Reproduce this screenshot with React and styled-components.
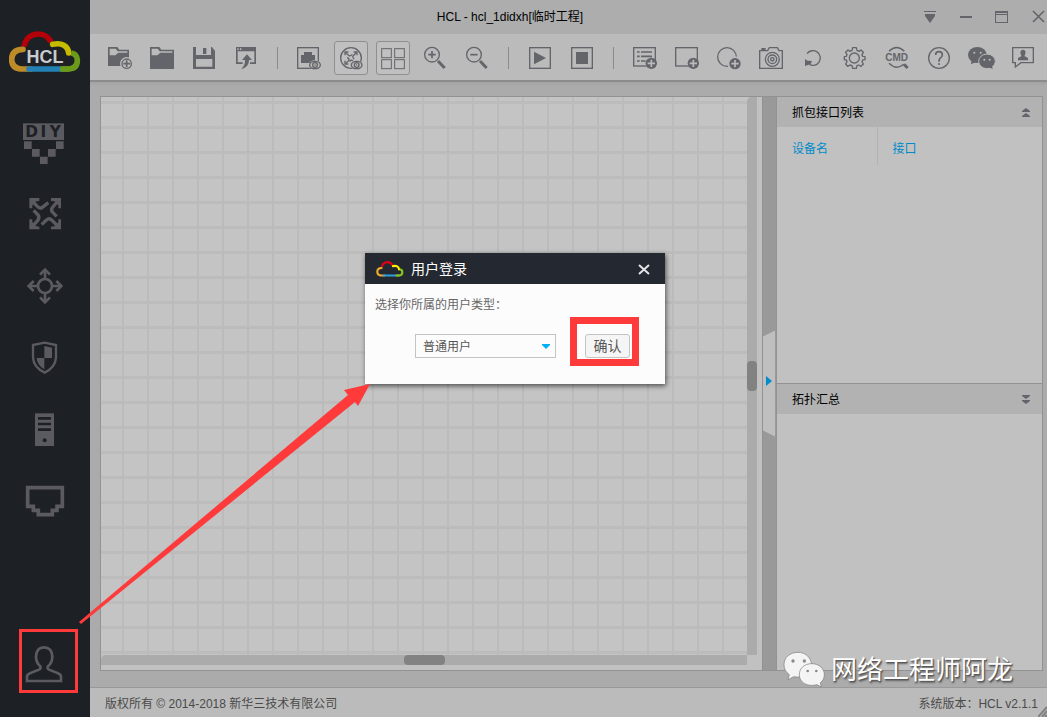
import { useState } from "react";
import { createGlobalStyle, styled } from "styled-components";

const INK = "#64656b";

const FolderShape = ({ w }) => (
  <path
    fillRule="evenodd"
    fill={INK}
    d={`M0 3H28L34 11H${w}V${w === 72 ? 69 : 60}H0Z M5 8V28H22L31 20H${w - 5}V16H29L23 8Z`}
  />
);

const PlusBadge = ({ x, y }) => (
  <>
    <circle cx={x} cy={y} r="17" fill={INK} />
    <path d={`M${x - 11} ${y}H${x + 11}M${x} ${y - 11}V${y + 11}`} stroke="#bbb" strokeWidth="5" />
  </>
);

const EyeBadge = ({ x, y }) => (
  <>
    <ellipse cx={x} cy={y} rx="19" ry="14" fill="#bbb" />
    <ellipse cx={x} cy={y} rx="16" ry="11" fill="none" stroke={INK} strokeWidth="4" />
    <circle cx={x} cy={y} r="7" fill="none" stroke={INK} strokeWidth="4" />
    <circle cx={x} cy={y} r="2" fill={INK} />
  </>
);

const Magnifier = ({ children }) => (
  <g fill="none" stroke={INK}>
    <circle cx="27" cy="26" r="22" strokeWidth="4" />
    <path d="M45 45L65 66" strokeWidth="9" />
    {children}
  </g>
);

const toolGroups = [
  [
    {
      label: "新建工程",
      icon: (
        <>
          <FolderShape w={63} />
          <circle cx="56" cy="53" r="20" fill="#bbb" />
          <circle cx="56" cy="53" r="14" fill="#bbb" stroke={INK} strokeWidth="4" />
          <path d="M46 53H66M56 43V63" stroke={INK} strokeWidth="5" />
        </>
      ),
    },
    { label: "打开工程", icon: <FolderShape w={72} /> },
    {
      label: "保存工程",
      icon: (
        <path
          fillRule="evenodd"
          fill={INK}
          d="M3 3H12V27H57V3H60L69 15V69H3Z M12 39V62H61V39Z M33 6H43V24H33Z"
        />
      ),
    },
    {
      label: "导出工程",
      icon: (
        <>
          <path fillRule="evenodd" fill={INK} d="M6 3H66V54H48V49H61V16H11V49H26V54H6Z M10 7V12H14V7Z M18 7V12H22V7Z" />
          <path fill={INK} d="M39 25L54 42H45Q46 62 21 70Q34 58 33 42H24Z" />
        </>
      ),
    },
  ],
  [
    {
      label: "显示接口",
      icon: (
        <>
          <rect x="2" y="5" width="62" height="62" fill="none" stroke={INK} strokeWidth="4" />
          <path fill={INK} d="M21 18H45V27H54V51H12V27H21Z" />
          <EyeBadge x={54} y={57} />
        </>
      ),
    },
    {
      label: "显示设备",
      active: true,
      icon: (
        <>
          <circle cx="36" cy="36" r="31" fill="none" stroke={INK} strokeWidth="4" />
          <g fill="none" stroke={INK} strokeWidth="4">
            <path d="M18 28V18H28M44 18H54V28M18 44V54H28" />
            <path d="M19 19L30 29Q35 31 40 25M53 19L43 29Q39 34 46 39M19 53L29 44Q32 39 25 34M32 47Q36 40 42 44" />
          </g>
          <EyeBadge x={53} y={57} />
        </>
      ),
    },
    {
      label: "显示网格",
      active: true,
      icon: (
        <g fill="none" stroke={INK} strokeWidth="3">
          <rect x="2" y="8" width="29" height="27" />
          <rect x="41" y="8" width="29" height="27" />
          <rect x="2" y="41" width="29" height="27" />
          <rect x="41" y="41" width="29" height="27" />
        </g>
      ),
    },
    {
      label: "放大",
      icon: (
        <Magnifier>
          <path d="M16 26H38M27 15V37" strokeWidth="5" />
        </Magnifier>
      ),
    },
    {
      label: "缩小",
      icon: (
        <Magnifier>
          <path d="M16 26H38" strokeWidth="5" />
        </Magnifier>
      ),
    },
  ],
  [
    {
      label: "启动",
      icon: (
        <>
          <rect x="5" y="5" width="62" height="62" fill="none" stroke={INK} strokeWidth="4" />
          <path fill={INK} d="M18 17L54 36L18 55Z" />
        </>
      ),
    },
    {
      label: "停止",
      icon: (
        <>
          <rect x="5" y="5" width="62" height="62" fill="none" stroke={INK} strokeWidth="4" />
          <rect x="18" y="18" width="36" height="36" fill={INK} />
        </>
      ),
    },
  ],
  [
    {
      label: "添加文本",
      icon: (
        <>
          <rect x="2" y="5" width="65" height="55" fill="none" stroke={INK} strokeWidth="4" />
          <path d="M12 18H20M24 18H57M12 31H20M24 31H57M12 45H20M24 45H38" stroke={INK} strokeWidth="5" />
          <PlusBadge x={55} y={52} />
        </>
      ),
    },
    {
      label: "添加矩形",
      icon: (
        <>
          <rect x="2" y="5" width="65" height="55" fill="none" stroke={INK} strokeWidth="4" />
          <PlusBadge x={55} y={52} />
        </>
      ),
    },
    {
      label: "添加圆形",
      icon: (
        <>
          <circle cx="30" cy="33" r="28" fill="none" stroke={INK} strokeWidth="4" />
          <circle cx="54" cy="53" r="22" fill="#bbb" />
          <PlusBadge x={54} y={53} />
        </>
      ),
    },
    {
      label: "截图",
      icon: (
        <g fill="none" stroke={INK} strokeWidth="4">
          <path d="M2 14H26L31 5H55L60 14H70V67H2Z" />
          <path d="M7 9H20" strokeWidth="6" />
          <circle cx="40" cy="40" r="21" />
          <circle cx="40" cy="40" r="13" />
          <circle cx="40" cy="40" r="5" />
        </g>
      ),
    },
    {
      label: "刷新",
      icon: (
        <>
          <path d="M18 23A22 22 0 1 1 25 55" fill="none" stroke={INK} strokeWidth="4" />
          <path fill={INK} d="M12 39L20 44L33 45L29 54L12 60Z" />
        </>
      ),
    },
    {
      label: "设置",
      icon: (
        <g fill="none" stroke={INK} strokeWidth="4">
          <path
            strokeLinejoin="round"
            d="M29 5H40L42 13L48 16L54 12L61 19L57 26L59 31L66 32V41L59 42L57 47L61 54L54 61L47 57L42 59L40 67H29L27 59L21 57L14 61L8 54L12 47L10 42L4 41V32L10 31L12 26L8 19L15 12L21 16L27 13Z"
          />
          <circle cx="34" cy="36" r="15" />
        </g>
      ),
    },
    {
      label: "命令行",
      icon: (
        <>
          <path d="M12 16Q35 -7 58 16M12 52Q34 74 56 55" fill="none" stroke={INK} strokeWidth="4" />
          <path d="M57 55L68 66" stroke={INK} strokeWidth="9" />
          <text x="35" y="44" textAnchor="middle" fontSize="30" fontWeight="700" fontFamily="Liberation Sans, sans-serif" fill={INK}>
            CMD
          </text>
        </>
      ),
    },
    {
      label: "帮助",
      icon: (
        <>
          <circle cx="36" cy="36" r="31" fill="none" stroke={INK} strokeWidth="4" />
          <path d="M26 27Q26 17 36 17Q46 17 46 27Q46 33 39 37Q36 40 36 47" fill="none" stroke={INK} strokeWidth="5" />
          <circle cx="36" cy="54" r="3" fill={INK} />
        </>
      ),
    },
    {
      label: "微信",
      icon: (
        <>
          <ellipse cx="25" cy="27" rx="28" ry="24" fill={INK} />
          <path fill={INK} d="M8 43L6 55L21 48Z" />
          <circle cx="16" cy="20" r="3" fill="#bbb" />
          <circle cx="35" cy="20" r="3" fill="#bbb" />
          <ellipse cx="54" cy="46" rx="25" ry="22" fill={INK} stroke="#bbb" strokeWidth="3" />
          <path fill={INK} d="M60 64L71 69L68 57Z" />
          <circle cx="46" cy="41" r="3" fill="#bbb" />
          <circle cx="62" cy="41" r="3" fill="#bbb" />
        </>
      ),
    },
    {
      label: "反馈",
      icon: (
        <>
          <path d="M5 5H67V50H30L13 63V50H5Z" fill="none" stroke={INK} strokeWidth="4" />
          <path fill={INK} d="M36 11C46 11 45 23 40 30L51 36V43H21V36L32 30C27 23 26 11 36 11Z" />
        </>
      ),
    },
  ],
];

const devices = [
  {
    label: "DIY",
    icon: (
      <>
        <rect x="0" y="10" width="123" height="50" fill="#5a5a60" />
        <g textAnchor="middle" fontSize="46" fontWeight="700" fontFamily="DejaVu Sans, sans-serif" fill="#1d2024">
          <text x="26" y="51">D</text>
          <text x="61" y="51">I</text>
          <text x="97" y="51">Y</text>
        </g>
        <path fill="#5a5a60" d="M3 64h23v23h-23zM99 64h23v23h-23zM27 87h23v23h-23zM75 87h23v23h-23zM51 110h23v23h-23z" />
      </>
    ),
  },
  {
    label: "路由器",
    icon: (
      <>
        <path fill="#5a5a60" d="M19 18H49V27L40 28L28 40V49H19ZM84 18H114V49H106V40L94 28L84 27ZM19 82H28V91L40 103L49 104V112H19ZM84 112V104L94 103L106 91V82H114V112Z" />
        <path
          fill="none"
          stroke="#5a5a60"
          strokeWidth="10"
          d="M28 27L42 42Q50 52 58 46L76 32M105 27L91 43Q82 52 88 60L101 73M28 103L41 89Q51 80 46 70L32 55M56 98L70 84Q79 77 86 84L105 103"
        />
      </>
    ),
  },
  {
    label: "交换机",
    icon: (
      <g fill="none" stroke="#5a5a60" strokeWidth="8">
        <circle cx="66" cy="66" r="21" />
        <path d="M66 45V17M66 87V115M45 66H17M87 66H115" />
        <path d="M51 32L66 17L81 32M51 100L66 115L81 100M32 51L17 66L32 81M100 51L115 66L100 81" />
      </g>
    ),
  },
  {
    label: "防火墙",
    icon: (
      <>
        <path d="M30 27L65 20L99 27V65Q97 94 65 110Q32 94 30 65Z" fill="none" stroke="#5a5a60" strokeWidth="7" />
        <path fill="#5a5a60" d="M64 30L87 35V66H64ZM64 66V100Q42 88 41 66Z" />
      </>
    ),
  },
  {
    label: "服务器",
    icon: (
      <>
        <rect x="36" y="16" width="57" height="98" fill="#5a5a60" />
        <path d="M45 31H84M45 48H84M45 65H84" stroke="#1d2024" strokeWidth="8" />
        <circle cx="65" cy="97" r="6" fill="#1d2024" />
      </>
    ),
  },
  {
    label: "终端",
    icon: (
      <path d="M14 23H118V79H102V91H88V104H46V91H31V79H14Z" fill="none" stroke="#5a5a60" strokeWidth="11" />
    ),
  },
];

const Cloud = ({ colors, children, ...rest }) => (
  <svg viewBox="27 93 216 126" aria-hidden="true" {...rest}>
    <g fill="none" strokeWidth="17" strokeLinecap="round">
      <path d="M72 140C78 95 135 90 153 126" stroke={colors[1]} strokeLinecap="butt" />
      <path d="M214 159Q232 162 232 181Q232 207 204 207H180" stroke={colors[4]} strokeLinecap="butt" />
      <path d="M69 148Q35 149 35 178Q35 207 68 207H92" stroke={colors[0]} />
      <path d="M87 207H178" stroke={colors[2]} />
      <path d="M158 133C185 127 204 137 206 159" stroke={colors[3]} />
      <path d="M188 207H204" stroke={colors[4]} />
    </g>
    {children}
  </svg>
);

const WechatMark = () => (
  <svg width="42" height="38" viewBox="0 0 126 114" aria-hidden="true">
    <g fill="#f4f4f4" stroke="#7a7a7a" strokeWidth="2">
      <path d="M45 4C20 4 3 20 3 41C3 54 9 64 19 71L15 86L32 77C78 84 88 58 86 40C83 18 66 4 45 4Z" />
      <path d="M86 38C64 38 49 52 49 71C49 94 72 109 102 101L115 108L112 95C120 89 124 81 124 71C124 52 108 38 86 38Z" />
    </g>
    <g fill="#8a8a8a">
      <circle cx="30" cy="30" r="5" />
      <circle cx="64" cy="30" r="5" />
      <circle cx="74" cy="60" r="4" />
      <circle cx="100" cy="60" r="4" />
    </g>
  </svg>
);

const App = () => {
  const [userType, setUserType] = useState("普通用户");

  return (
    <>
      <GlobalStyle />
      <Shell>
        <Sidebar>
          <Logo colors={["#bd8b27", "#b40008", "#2380b5", "#c5bb00", "#6c9a1b"]}>
            <text x="135" y="190" textAnchor="middle" fontSize="54" fontWeight="700" fontFamily="Liberation Sans, sans-serif" fill="#c8cbd0">
              HCL
            </text>
          </Logo>
          <DeviceNav>
            {devices.map((device) => (
              <DeviceButton key={device.label} aria-label={device.label}>
                <svg width="44" height="44" viewBox="0 0 132 132">{device.icon}</svg>
              </DeviceButton>
            ))}
          </DeviceNav>
          <UserButton aria-label="用户">
            <svg width="44" height="44" viewBox="0 0 132 132">
              <path
                d="M12 117V104Q12 98 21 94L48 83Q55 79 52 73Q39 61 39 44Q40 16 63 16Q87 16 88 44Q88 61 75 73Q71 79 78 83L105 94Q114 98 114 104V117Z"
                fill="none"
                stroke="#5a5a60"
                strokeWidth="8"
              />
            </svg>
            <UserMark />
          </UserButton>
        </Sidebar>

        <Content>
          <TitleBar>
            <Title>HCL - hcl_1didxh[临时工程]</Title>
            <WindowControls>
              <WindowButton aria-label="菜单">
                <svg width="14" height="14" fill={INK}>
                  <path d="M1 1H13V2H1ZM2 4H12V6L7 13L2 6Z" />
                </svg>
              </WindowButton>
              <WindowButton aria-label="最小化">
                <svg width="14" height="14" fill={INK}>
                  <path d="M1 6H13V8H1Z" />
                </svg>
              </WindowButton>
              <WindowButton aria-label="最大化">
                <svg width="14" height="14" fill={INK}>
                  <path fillRule="evenodd" d="M0 1H13V13H0ZM1 5V12H12V5ZM1 3V4H12V3Z" />
                </svg>
              </WindowButton>
              <WindowButton aria-label="关闭">
                <svg width="14" height="14" stroke={INK} strokeWidth="1.6">
                  <path d="M2 1L13 12M13 1L2 12" />
                </svg>
              </WindowButton>
            </WindowControls>
          </TitleBar>

          <Toolbar>
            {toolGroups.map((group, index) => (
              <ToolGroup key={index}>
                {group.map((tool) => (
                  <ToolCell key={tool.label}>
                    <ToolButton $active={tool.active} aria-label={tool.label}>
                      <svg width="24" height="24" viewBox="0 0 72 72" overflow="visible">
                        {tool.icon}
                      </svg>
                    </ToolButton>
                  </ToolCell>
                ))}
              </ToolGroup>
            ))}
          </Toolbar>

          <Main>
            <Workspace>
              <GridCanvas />
              <ScrollTrack>
                <ScrollThumb $vertical />
              </ScrollTrack>
              <ScrollTrack>
                <ScrollThumb />
              </ScrollTrack>
            </Workspace>
            <Splitter>
              <CollapseHandle aria-label="收起侧栏">
                <svg width="6" height="10" fill="#008bc9">
                  <path d="M0 0L6 5L0 10Z" />
                </svg>
              </CollapseHandle>
            </Splitter>
            <SidePanels>
              <Panel>
                <PanelHeader>
                  <PanelTitle>抓包接口列表</PanelTitle>
                  <PanelToggle aria-label="收起">
                    <svg width="8" height="10" fill={INK}>
                      <path d="M4 0L8 3V4H0V3ZM4 5L8 8V9H0V8Z" />
                    </svg>
                  </PanelToggle>
                </PanelHeader>
                <CaptureTable>
                  <thead>
                    <tr>
                      <th>设备名</th>
                      <th>接口</th>
                    </tr>
                  </thead>
                </CaptureTable>
              </Panel>
              <Panel>
                <PanelHeader>
                  <PanelTitle>拓扑汇总</PanelTitle>
                  <PanelToggle aria-label="展开">
                    <svg width="8" height="10" fill={INK}>
                      <path d="M0 0H8V1L4 4L0 1ZM0 5H8V6L4 9L0 6Z" />
                    </svg>
                  </PanelToggle>
                </PanelHeader>
              </Panel>
            </SidePanels>
          </Main>

          <Footer>
            <span>版权所有 © 2014-2018 新华三技术有限公司</span>
            <span>系统版本：HCL v2.1.1</span>
            <Grip width="9" height="12" stroke="#808080" strokeWidth="2">
              <path d="M0 12L9 2M4 12L9 6M7 12L9 10" />
            </Grip>
          </Footer>
        </Content>

        <LoginDialog role="dialog" aria-labelledby="login-title">
          <DialogHeader>
            <Cloud width="28" height="16" colors={["#f0a92f", "#e60012", "#2ea0e0", "#fff000", "#86c222"]} />
            <DialogTitle id="login-title">用户登录</DialogTitle>
            <DialogClose aria-label="关闭">
              <svg width="12" height="12" stroke="#e4e4e6" strokeWidth="2">
                <path d="M1 2L11 11M11 2L1 11" />
              </svg>
            </DialogClose>
          </DialogHeader>
          <DialogBody>
            <label htmlFor="user-type">选择你所属的用户类型：</label>
            <DialogRow>
              <SelectBox>
                <UserTypeSelect
                  id="user-type"
                  value={userType}
                  onChange={(event) => setUserType(event.target.value)}
                >
                  <option>普通用户</option>
                </UserTypeSelect>
                <SelectArrow width="8" height="5" fill="#00b0f6">
                  <path d="M0 0H8V1L4 5L0 1Z" />
                </SelectArrow>
              </SelectBox>
              <ConfirmWrap>
                <ConfirmButton>确认</ConfirmButton>
                <ConfirmMark />
              </ConfirmWrap>
            </DialogRow>
          </DialogBody>
        </LoginDialog>

        <Arrow width="292" height="242" fill="#fe3a3a">
          <path d="M0 240L269 13L265 8L291 2L279 24L276 20L2 242Z" />
        </Arrow>

        <Watermark>
          <WechatMark />
          <span>网络工程师阿龙</span>
        </Watermark>
      </Shell>
    </>
  );
};

const GlobalStyle = createGlobalStyle`
  * {
    box-sizing: border-box;
  }
  body {
    margin: 0;
    font: 12px/16px "Liberation Sans", "Noto Sans CJK SC", sans-serif;
    color: #000;
  }
  button {
    display: flex;
    align-items: center;
    justify-content: center;
    padding: 0;
    border: 0;
    background: none;
    font: inherit;
    color: inherit;
    cursor: pointer;
  }
  svg {
    display: block;
    flex: none;
  }
`;

const Shell = styled.div`
  position: relative;
  display: flex;
  height: 100vh;
  overflow: hidden;
`;

const Sidebar = styled.aside`
  display: flex;
  flex-direction: column;
  width: 90px;
  flex: none;
  padding: 31px 0 31px;
  background: #1d2024;
`;

const Logo = styled(Cloud)`
  width: 72px;
  height: 42px;
  margin: 0 9px 33px;
`;

const DeviceNav = styled.nav`
  display: flex;
  flex-direction: column;
`;

const DeviceButton = styled.button`
  height: 72px;
`;

const UserButton = styled.button`
  position: relative;
  width: 44px;
  height: 44px;
  margin: auto auto 0;
`;

const UserMark = styled.span`
  position: absolute;
  top: -13px;
  left: -4px;
  width: 59px;
  height: 64px;
  border: 3px solid #fe3a3a;
`;

const Content = styled.div`
  display: flex;
  flex-direction: column;
  flex: 1;
  min-width: 0;
  background: #ababab;
`;

const TitleBar = styled.header`
  display: flex;
  align-items: center;
  height: 34px;
  background: #adadad;
`;

const Title = styled.h1`
  flex: 1;
  margin: 0;
  padding-left: 9px;
  font-size: 12px;
  font-weight: 400;
  text-align: center;
`;

const WindowControls = styled.div`
  display: flex;
  gap: 18px;
`;

const WindowButton = styled.button`
  width: 18px;
  height: 18px;
`;

const Toolbar = styled.div`
  display: flex;
  height: 48px;
  padding: 2px 0 0 9px;
  background: #bbb;
  border-bottom: 2px solid #8c8c8c;
`;

const ToolGroup = styled.div`
  display: flex;
  align-items: center;

  & + &::before {
    content: "";
    width: 1px;
    height: 22px;
    margin: 0 10px;
    background: #8a8a8a;
  }
`;

const ToolCell = styled.div`
  display: flex;
  justify-content: center;
  width: 42px;
`;

const ToolButton = styled.button`
  width: 34px;
  height: 34px;
  border: 1px solid ${({ $active }) => ($active ? "#8f8f8f" : "transparent")};
  border-radius: 3px;
  background: ${({ $active }) => ($active ? "#c0c0c0" : "none")};
`;

const Main = styled.main`
  display: flex;
  flex: 1;
  min-height: 0;
  padding: 14px 4px 16px 10px;
  background: linear-gradient(#a3a3a3, #ababab 4px);
`;

const Workspace = styled.section`
  display: grid;
  grid-template: 1fr 10px / 1fr 10px;
  flex: 1;
  padding: 0 5px 5px 0;
  border: 1px solid #929292;
  background: #c1c1c1;
`;

const GridCanvas = styled.div`
  background-color: #c4c4c4;
  background-image: linear-gradient(90deg, #bbb 2px, transparent 2px),
    linear-gradient(#bcbcbc 3px, transparent 3px);
  background-size: 25px 25px;
  background-position: 21px 4px;
`;

const ScrollTrack = styled.div`
  display: flex;
  align-items: center;
  justify-content: center;
  border-radius: 5px 0 0 0;
  background: #ababab;
`;

const ScrollThumb = styled.div`
  width: ${({ $vertical }) => ($vertical ? "10px" : "41px")};
  height: ${({ $vertical }) => ($vertical ? "30px" : "10px")};
  border-radius: 4px;
  background: #828282;
`;

const Splitter = styled.div`
  display: flex;
  align-items: center;
  width: 13px;
  border-top: 1px solid #929292;
  border-bottom: 1px solid #929292;
  background: #999;
`;

const CollapseHandle = styled.button`
  width: 12px;
  height: 106px;
  padding-bottom: 6px;
  background: #bfbfbf;
  clip-path: polygon(0 6px, 100% 0, 100% 100%, 0 100px);
`;

const SidePanels = styled.aside`
  display: flex;
  flex-direction: column;
  width: 267px;
  border: 1px solid #929292;
  border-top: 0;
`;

const Panel = styled.section`
  flex: 1;
  border-top: 1px solid #929292;
  background: #c1c1c1;
`;

const PanelHeader = styled.header`
  display: flex;
  align-items: center;
  justify-content: space-between;
  height: 30px;
  padding: 2px 11px 0 15px;
  background: #b2b2b2;
`;

const PanelTitle = styled.h2`
  margin: 0;
  font-size: 12px;
  font-weight: 400;
`;

const PanelToggle = styled.button`
  width: 10px;
  height: 16px;
`;

const CaptureTable = styled.table`
  width: 100%;
  border-collapse: collapse;
  table-layout: fixed;

  th {
    height: 38px;
    padding: 5px 15px 0;
    font-weight: 400;
    text-align: left;
    color: #008bc9;
  }

  th:first-child {
    width: 100px;
    border-right: 1px solid #b2b2b2;
  }
`;

const Footer = styled.footer`
  position: relative;
  display: flex;
  align-items: center;
  justify-content: space-between;
  height: 30px;
  padding: 2px 9px 0 15px;
  border-top: 1px solid #999;
  background: #bbb;
  color: #4a4a4a;
`;

const Grip = styled.svg`
  position: absolute;
  right: 0;
  bottom: 0;
`;

const LoginDialog = styled.div`
  position: absolute;
  top: 253px;
  left: 365px;
  width: 300px;
  background: #fcfcfc;
  box-shadow: 1px 2px 5px rgba(0, 0, 0, 0.6);
`;

const DialogHeader = styled.header`
  display: flex;
  align-items: center;
  height: 31px;
  padding: 0 14px 0 11px;
  background: #242830;
  color: #fff;
`;

const DialogTitle = styled.h2`
  flex: 1;
  margin: 0 0 0 7px;
  font-size: 14px;
  font-weight: 400;
`;

const DialogClose = styled.button`
  width: 14px;
  height: 16px;
`;

const DialogBody = styled.div`
  padding: 13px 10px 26px;
  color: #666;

  label {
    display: block;
  }
`;

const DialogRow = styled.div`
  display: flex;
  gap: 29px;
  padding: 21px 0 0 40px;
`;

const SelectBox = styled.div`
  position: relative;
  width: 141px;
`;

const UserTypeSelect = styled.select`
  width: 100%;
  height: 24px;
  padding: 2px 7px 0;
  border: 1px solid #c4c4c4;
  border-radius: 0;
  appearance: none;
  background: #fcfcfc;
  font: inherit;
  color: #555;
`;

const SelectArrow = styled.svg`
  position: absolute;
  top: 10px;
  right: 6px;
  pointer-events: none;
`;

const ConfirmWrap = styled.div`
  position: relative;
`;

const ConfirmButton = styled.button`
  width: 45px;
  height: 24px;
  border: 1px solid #c4c4c4;
  border-radius: 3px;
  background: #f5f5f5;
  font-size: 14px;
  color: #555;
`;

const ConfirmMark = styled.span`
  position: absolute;
  top: -17px;
  left: -15px;
  width: 69px;
  height: 49px;
  border: 7px solid #fe3a3a;
  pointer-events: none;
`;

const Arrow = styled.svg`
  position: absolute;
  top: 382px;
  left: 79px;
  pointer-events: none;
`;

const Watermark = styled.div`
  position: absolute;
  right: 34px;
  bottom: 28px;
  display: flex;
  align-items: center;
  gap: 6px;
  font-size: 26px;
  line-height: 36px;
  color: #fff;
  text-shadow: 1px 1px 1px #555, 1px 2px 2px #666;
`;

export default App;
